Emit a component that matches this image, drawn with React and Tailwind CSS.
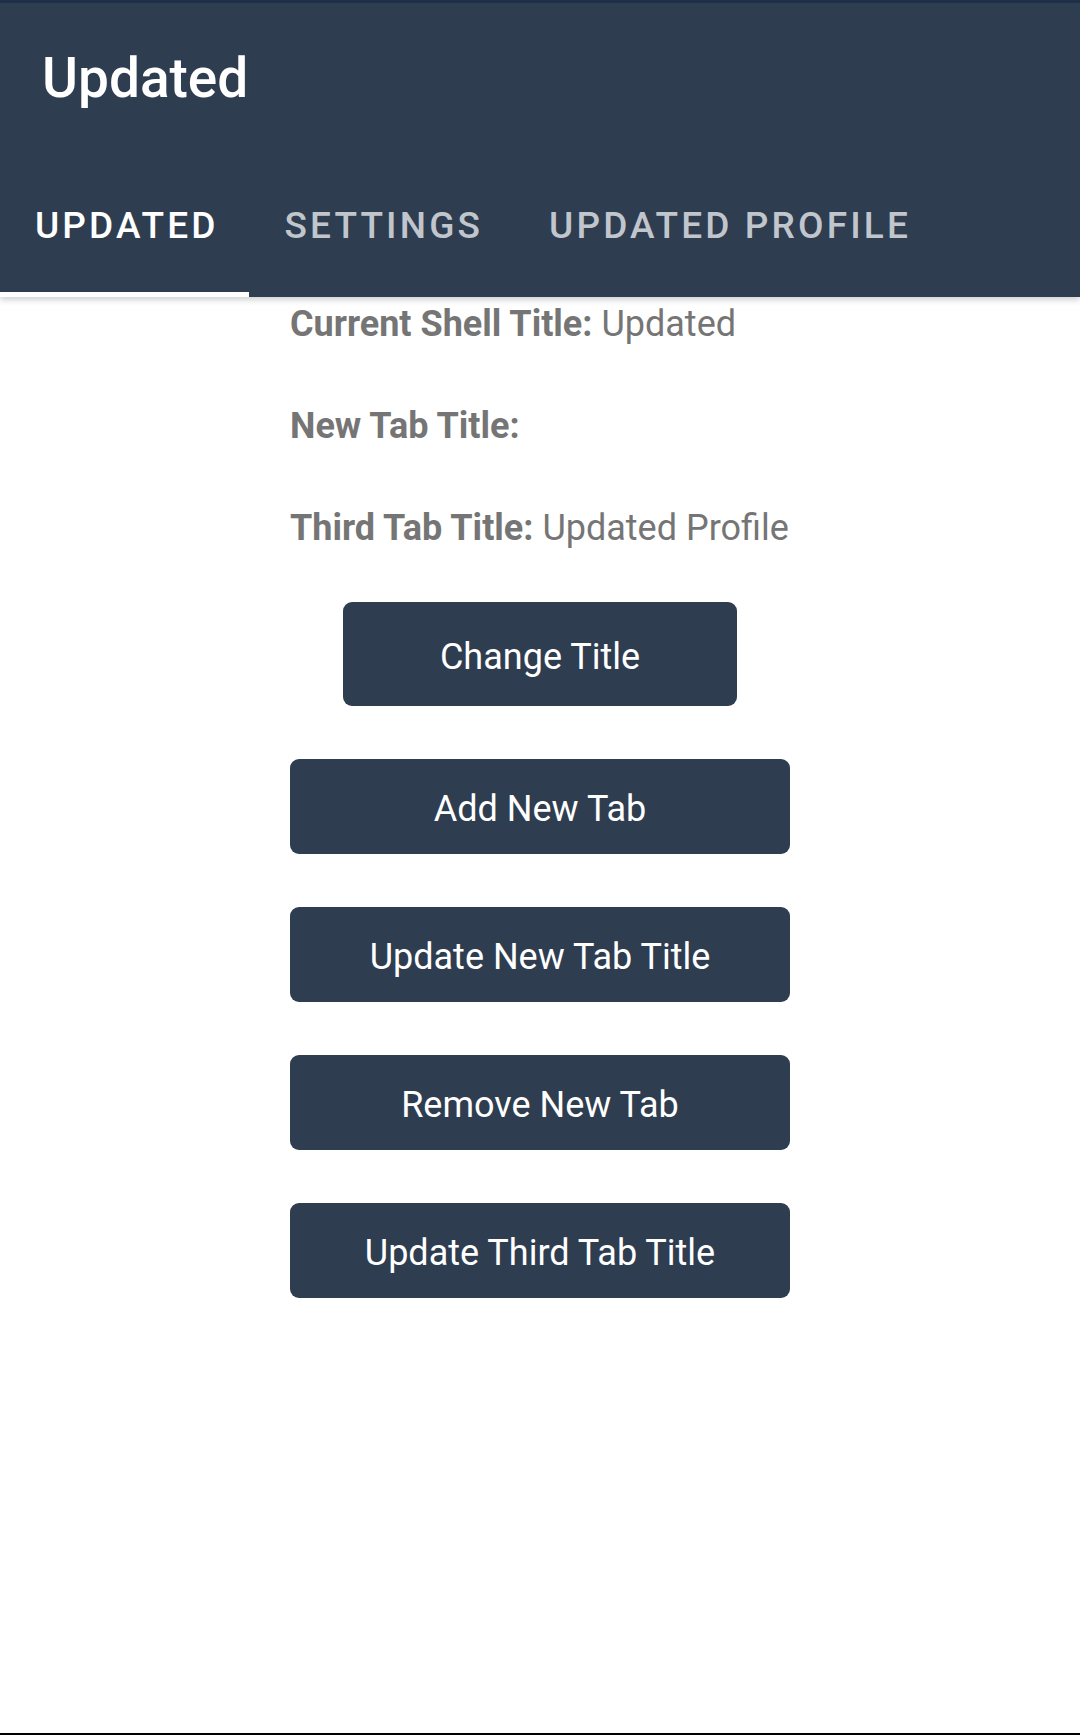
import React from "react";

const tabs = ["Updated", "Settings", "Updated Profile"];

const rows = [
  { label: "Current Shell Title:", value: "Updated" },
  { label: "New Tab Title:", value: "" },
  { label: "Third Tab Title:", value: "Updated Profile" },
];

const buttons = [
  "Add New Tab",
  "Update New Tab Title",
  "Remove New Tab",
  "Update Third Tab Title",
];

const App = () => {
  return (
    <div
      className="h-[1735px] flex flex-col bg-white"
      style={{ fontFamily: "Roboto, 'Noto Sans', sans-serif" }}
    >
      {/* app bar */}
      <div className="relative z-10 bg-[#2e3d50] shadow-[0_3px_6px_rgba(0,0,0,0.18)]">
        <div className="h-[3px] bg-[#1d3047]" />
        <div className="h-[150px] flex items-center px-[42px]">
          <h1 className="text-[55px] font-medium text-white leading-none">
            Updated
          </h1>
        </div>
        <div className="flex h-[144px]">
          {tabs.map((tab, i) => (
            <div
              key={tab}
              className={`relative flex items-center pl-[35px] pr-[31px] ${
                i === 0 ? "text-white" : "text-[#c1c6cd]"
              }`}
            >
              <span className="text-[37px] font-medium uppercase tracking-[0.085em] leading-none whitespace-nowrap">
                {tab}
              </span>
              {i === 0 && (
                <div className="absolute left-0 right-0 bottom-0 h-[5px] bg-white" />
              )}
            </div>
          ))}
        </div>
      </div>

      {/* content */}
      <div className="flex-1 pt-[1px]">
        <div className="w-[500px] mx-auto flex flex-col">
          <div className="flex flex-col gap-[50px] text-[36px] text-[#757575] leading-[52px] whitespace-nowrap">
            {rows.map((row) => (
              <p key={row.label}>
                <span className="font-bold">{row.label}</span>
                {row.value && <span> {row.value}</span>}
              </p>
            ))}
          </div>

          <button className="mt-[48px] self-center w-[394px] h-[104px] pt-[5px] rounded-[9px] bg-[#2e3d50] text-white text-[36px]">
            Change Title
          </button>

          <div className="mt-[53px] flex flex-col gap-[53px]">
            {buttons.map((b) => (
              <button
                key={b}
                className="w-full h-[95px] pt-[4px] rounded-[9px] bg-[#2e3d50] text-white text-[36px]"
              >
                {b}
              </button>
            ))}
          </div>
        </div>
      </div>

      <div className="h-[2px] bg-black" />
    </div>
  );
};

export default App;
